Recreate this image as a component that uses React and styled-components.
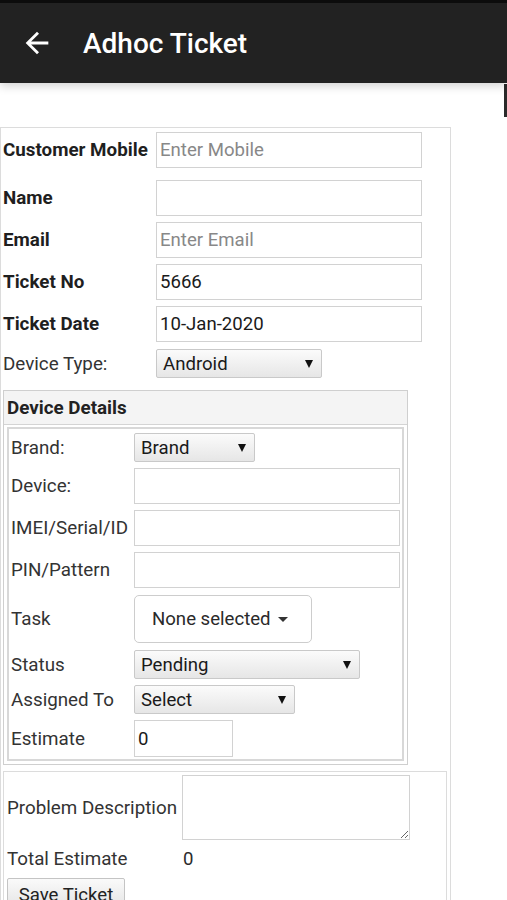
import React from 'react';
import styled, { createGlobalStyle } from 'styled-components';

const GlobalStyle = createGlobalStyle`
  html, body {
    margin: 0;
    padding: 0;
    background: #fff;
    overflow: hidden;
  }
  body {
    font-family: Roboto, "Liberation Sans", Arial, sans-serif;
    color: #2b2b2b;
  }
  * { box-sizing: border-box; }
`;

const Screen = styled.div`
  position: relative;
  width: 507px;
  height: 900px;
  overflow: hidden;
`;

const AppBar = styled.header`
  position: relative;
  z-index: 2;
  display: flex;
  align-items: center;
  height: 83px;
  border-top: 3px solid #0c0c0c;
  background: #222222;
  box-shadow: 0 3px 9px rgba(0, 0, 0, 0.18);
`;

const BackButton = styled.button`
  display: flex;
  align-items: center;
  justify-content: center;
  margin-left: 20px;
  padding: 0;
  width: 34px;
  height: 34px;
  border: none;
  background: none;
  color: #fff;
`;

const Title = styled.h1`
  margin: 0 0 0 29px;
  font-size: 28px;
  font-weight: 500;
  color: #fff;
`;

const ScrollThumb = styled.div`
  position: absolute;
  right: 0;
  top: 84px;
  width: 3px;
  height: 33px;
  background: #2a2a2a;
`;

const Page = styled.main`
  padding-top: 44px;
`;

const Panel = styled.div`
  width: ${p => p.$width}px;
  padding: ${p => p.$pad || '0'};
  border: 1px solid #dcdcdc;
  display: flex;
  flex-direction: column;
  gap: ${p => p.$gap || 6}px;
`;

const Row = styled.div`
  display: flex;
  align-items: center;
  min-height: ${p => p.$height || 29}px;
  margin-bottom: ${p => p.$after || 0}px;
`;

const Label = styled.label`
  flex: none;
  width: ${p => p.$width}px;
  font-size: 18.8px;
  font-weight: ${p => (p.$bold ? 700 : 400)};
  color: ${p => (p.$bold ? '#1f1f1f' : '#333')};
  white-space: nowrap;
`;

const TextInput = styled.input`
  width: ${p => p.$width}px;
  height: ${p => p.$height || 36}px;
  padding: 0 3px;
  border: 1px solid #d2d2d2;
  border-radius: 0;
  background: #fff;
  font-family: inherit;
  font-size: 18.6px;
  color: #1a1a1a;
  outline: none;

  &::placeholder {
    color: #888;
  }
`;

const SelectBox = styled.div`
  display: flex;
  align-items: center;
  justify-content: space-between;
  width: ${p => p.$width}px;
  height: 29px;
  padding: 0 8px 0 6px;
  border: 1px solid #c9c9c9;
  border-radius: 2px;
  background: linear-gradient(#fbfbfb, #e6e6e6);
  font-size: 18.6px;
  color: #1a1a1a;
`;

const Arrow = styled.span`
  width: 0;
  height: 0;
  border-left: 4px solid transparent;
  border-right: 4px solid transparent;
  border-top: 8px solid #111;
`;

const DetailsBox = styled.div`
  width: 405px;
  margin-top: 6px;
  border: 1px solid #cfcfcf;
  padding: 0 3px 3px;
`;

const DetailsHeader = styled.div`
  height: 34px;
  display: flex;
  align-items: center;
  margin: 0 -3px;
  padding-left: 3px;
  background: #f4f4f4;
  border-bottom: 1px solid #d4d4d4;
  font-size: 18.8px;
  font-weight: 700;
  color: #222;
`;

const DetailsBody = styled.div`
  margin-top: 2px;
  width: 397px;
  padding: 4px 2px 2px;
  border: 2px solid #d8d8d8;
  display: flex;
  flex-direction: column;
  gap: 6px;
`;

const TaskButton = styled.button`
  display: flex;
  align-items: center;
  gap: 7px;
  width: 178px;
  height: 48px;
  padding: 0 0 0 17px;
  border: 1px solid #cdcdcd;
  border-radius: 5px;
  background: #fff;
  font-family: inherit;
  font-size: 18.6px;
  color: #2a2a2a;
`;

const Caret = styled.span`
  width: 0;
  height: 0;
  border-left: 5px solid transparent;
  border-right: 5px solid transparent;
  border-top: 5px solid #333;
`;

const TextArea = styled.textarea`
  width: 228px;
  height: 65px;
  border: 1px solid #d2d2d2;
  resize: both;
  font-family: inherit;
  font-size: 18px;
`;

const Value = styled.span`
  font-size: 18.6px;
  color: #2b2b2b;
`;

const SaveButton = styled.button`
  width: 118px;
  height: 34px;
  padding: 0;
  border: 1px solid #c4c4c4;
  border-radius: 2px;
  background: linear-gradient(#fafafa, #e2e2e2);
  font-family: inherit;
  font-size: 18.6px;
  color: #222;
`;

const BackArrow = () => (
  <svg width="34" height="34" viewBox="0 0 24 24" fill="currentColor">
    <path d="M20 11H7.83l5.59-5.59L12 4l-8 8 8 8 1.41-1.41L7.83 13H20v-2z" />
  </svg>
);

function Select({ width, children }) {
  return (
    <SelectBox $width={width}>
      <span>{children}</span>
      <Arrow />
    </SelectBox>
  );
}

export default function App() {
  return (
    <Screen>
      <GlobalStyle />
      <AppBar>
        <BackButton aria-label="Back"><BackArrow /></BackButton>
        <Title>Adhoc Ticket</Title>
      </AppBar>
      <ScrollThumb />

      <Page>
        <Panel $width={451} $pad="4px 0 40px 2px">
          <Row $height={36} $after={6}>
            <Label $bold $width={153}>Customer Mobile</Label>
            <TextInput $width={266} placeholder="Enter Mobile" />
          </Row>
          <Row $height={36}>
            <Label $bold $width={153}>Name</Label>
            <TextInput $width={266} />
          </Row>
          <Row $height={36}>
            <Label $bold $width={153}>Email</Label>
            <TextInput $width={266} placeholder="Enter Email" />
          </Row>
          <Row $height={36}>
            <Label $bold $width={153}>Ticket No</Label>
            <TextInput $width={266} defaultValue="5666" />
          </Row>
          <Row $height={36} $after={1}>
            <Label $bold $width={153}>Ticket Date</Label>
            <TextInput $width={266} defaultValue="10-Jan-2020" />
          </Row>
          <Row>
            <Label $width={153}>Device Type:</Label>
            <Select width={166}>Android</Select>
          </Row>

          <DetailsBox>
            <DetailsHeader>Device Details</DetailsHeader>
            <DetailsBody>
              <Row>
                <Label $width={123}>Brand:</Label>
                <Select width={121}>Brand</Select>
              </Row>
              <Row $height={36}>
                <Label $width={123}>Device:</Label>
                <TextInput $width={266} />
              </Row>
              <Row $height={36}>
                <Label $width={123}>IMEI/Serial/ID</Label>
                <TextInput $width={266} />
              </Row>
              <Row $height={36} $after={1}>
                <Label $width={123}>PIN/Pattern</Label>
                <TextInput $width={266} />
              </Row>
              <Row $height={48} $after={1}>
                <Label $width={123}>Task</Label>
                <TaskButton>None selected <Caret /></TaskButton>
              </Row>
              <Row>
                <Label $width={123}>Status</Label>
                <Select width={226}>Pending</Select>
              </Row>
              <Row>
                <Label $width={123}>Assigned To</Label>
                <Select width={161}>Select</Select>
              </Row>
              <Row $height={37}>
                <Label $width={123}>Estimate</Label>
                <TextInput $width={99} $height={37} defaultValue="0" />
              </Row>
            </DetailsBody>
          </DetailsBox>

          <Panel $width={444} $pad="3px 0 20px 3px">
            <Row $height={65}>
              <Label $width={175}>Problem Description</Label>
              <TextArea />
            </Row>
            <Row $height={26}>
              <Label $width={176}>Total Estimate</Label>
              <Value>0</Value>
            </Row>
            <Row $height={34}>
              <SaveButton>Save Ticket</SaveButton>
            </Row>
          </Panel>
        </Panel>
      </Page>
    </Screen>
  );
}
